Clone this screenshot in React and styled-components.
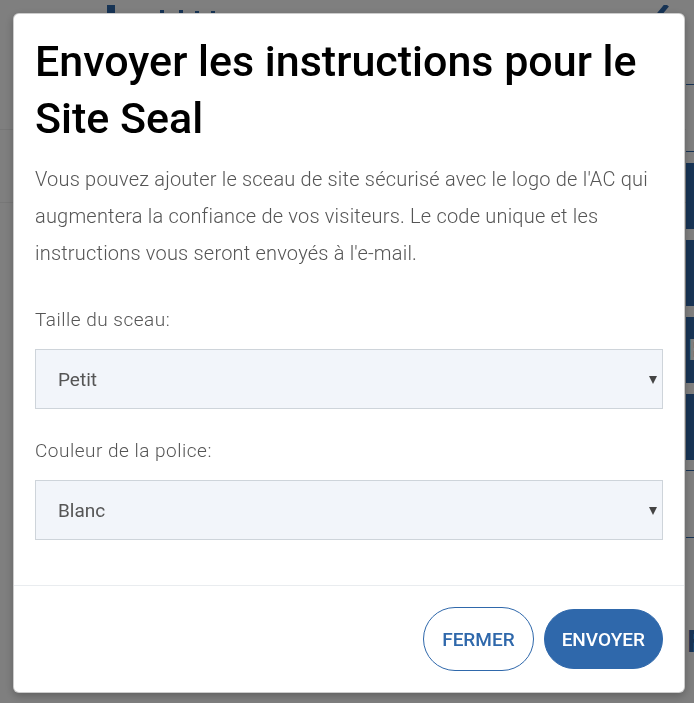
import React from "react";
import styled, { createGlobalStyle } from "styled-components";

const GlobalStyle = createGlobalStyle`
  html, body {
    margin: 0;
    padding: 0;
    overflow: hidden;
  }
  body {
    font-family: Roboto, "Liberation Sans", sans-serif;
    background: #fff;
  }
`;

/* page under the dialog */
const Page = styled.div`
  width: 880px;
  height: 703px;
  display: flex;
  background: #fff;
`;

const Main = styled.div`
  width: 686px;
  display: flex;
  flex-direction: column;
`;

const Header = styled.header`
  height: 130px;
  box-sizing: border-box;
  padding: 5px 17px 0 107px;
  display: flex;
  justify-content: space-between;
  align-items: flex-start;
  border-bottom: 1px solid #eee;
`;

const Band = styled.div`
  height: 72px;
  border-bottom: 1px solid #eee;
`;

const Sidebar = styled.aside`
  width: 194px;
  padding-top: 84px;
  display: flex;
  flex-direction: column;
`;

const SideSection = styled.div`
  height: 66px;
  margin-top: ${(p) => p.$offset || 0}px;
  border-top: 1px solid #2f68ab;
  border-bottom: 1px solid #2f68ab;
`;

const SideButtons = styled.div`
  margin-top: 11px;
  display: flex;
  flex-direction: column;
  gap: 11px;
`;

const SideButton = styled.div`
  height: 66px;
  background: #2f68ab;
  color: #fff;
  font-size: 30px;
  font-weight: 500;
  line-height: 66px;
  padding-left: 2px;
`;

const SideTitle = styled.div`
  margin-top: 84px;
  padding-left: 1px;
  color: #2f68ab;
  font-size: 32px;
  font-weight: 700;
`;

/* dialog */
const Backdrop = styled.div`
  position: fixed;
  inset: 0;
  background: rgba(0, 0, 0, 0.5);
  display: flex;
  align-items: flex-start;
  padding: 13px 0 0 13px;
`;

const Modal = styled.div`
  width: 672px;
  box-sizing: border-box;
  background: #fff;
  border: 1px solid rgba(0, 0, 0, 0.2);
  border-radius: 6px;
  box-shadow: 0 3px 9px rgba(0, 0, 0, 0.25);
  display: flex;
  flex-direction: column;
`;

const ModalHeader = styled.div`
  padding: 19px 21px 0;
`;

const Title = styled.h4`
  margin: 0;
  font-size: 43px;
  line-height: 57px;
  font-weight: 500;
  color: #000;
`;

const ModalBody = styled.div`
  padding: 14px 21px 45px;
  display: flex;
  flex-direction: column;
`;

const Intro = styled.p`
  margin: 0 0 34px;
  font-size: 20px;
  line-height: 37px;
  letter-spacing: 0.2px;
  font-weight: 300;
  color: #555;
`;

const Fields = styled.div`
  display: flex;
  flex-direction: column;
  gap: 28px;
`;

const Field = styled.div`
  display: flex;
  flex-direction: column;
  gap: 16px;
`;

const Label = styled.label`
  font-size: 19px;
  line-height: 27px;
  letter-spacing: 0.5px;
  font-weight: 300;
  color: #555;
`;

const SelectWrap = styled.div`
  position: relative;
`;

const Select = styled.select`
  appearance: none;
  width: 100%;
  height: 60px;
  box-sizing: border-box;
  padding: 0 30px 0 22px;
  border: 1px solid #ced4da;
  border-radius: 0;
  background: #f2f5fa;
  font-family: inherit;
  font-size: 19px;
  font-weight: 400;
  color: #555;
  outline: none;
`;

const Caret = styled.svg`
  position: absolute;
  right: 6px;
  top: 26px;
  width: 8px;
  height: 9px;
  pointer-events: none;
`;

const ModalFooter = styled.div`
  border-top: 1px solid #e9ecef;
  padding: 21px 21px 21px;
  display: flex;
  justify-content: flex-end;
  align-items: center;
  gap: 10px;
`;

const Button = styled.button`
  height: ${(p) => (p.$primary ? 60 : 64)}px;
  padding: 0 ${(p) => (p.$primary ? 17 : 18)}px;
  border: 1px solid #2f68ab;
  border-radius: 32px;
  background: ${(p) => (p.$primary ? "#2f68ab" : "#fff")};
  color: ${(p) => (p.$primary ? "#fff" : "#2f68ab")};
  font-family: inherit;
  font-size: 19px;
  font-weight: 500;
  text-transform: uppercase;
  cursor: pointer;
`;

const Logo = () => (
  <svg width="120" height="30" viewBox="0 0 120 30">
    <rect x="0" y="0" width="8" height="30" fill="#2f68ab" />
    <rect x="53" y="5" width="4" height="25" fill="#2f68ab" />
    <rect x="72" y="5" width="4" height="25" fill="#2f68ab" />
    <rect x="88" y="6" width="4" height="24" fill="#2f68ab" />
    <rect x="104" y="6" width="4" height="24" fill="#2f68ab" />
  </svg>
);

const Slash = () => (
  <svg width="16" height="30" viewBox="0 0 16 30">
    <path d="M14 0 L4 12 L1 30" stroke="#2f68ab" strokeWidth="5" fill="none" />
  </svg>
);

const Arrow = () => (
  <Caret viewBox="0 0 8 9">
    <path d="M0 1 H8 L4 9 Z" fill="#444" />
  </Caret>
);

const SealField = ({ label, value, options }) => (
  <Field>
    <Label>{label}</Label>
    <SelectWrap>
      <Select defaultValue={value}>
        {options.map((o) => (
          <option key={o}>{o}</option>
        ))}
      </Select>
      <Arrow />
    </SelectWrap>
  </Field>
);

const App = () => {
  return (
    <>
      <GlobalStyle />
      <Page>
        <Main>
          <Header>
            <Logo />
            <Slash />
          </Header>
          <Band />
        </Main>
        <Sidebar>
          <SideSection />
          <SideButtons>
            <SideButton />
            <SideButton />
            <SideButton>E</SideButton>
            <SideButton />
          </SideButtons>
          <SideSection $offset={10} />
          <SideTitle>F</SideTitle>
        </Sidebar>
      </Page>
      <Backdrop>
        <Modal>
          <ModalHeader>
            <Title>Envoyer les instructions pour le Site Seal</Title>
          </ModalHeader>
          <ModalBody>
            <Intro>
              Vous pouvez ajouter le sceau de site sécurisé avec le logo de
              l'AC qui augmentera la confiance de vos visiteurs. Le code unique
              et les instructions vous seront envoyés à l'e-mail.
            </Intro>
            <Fields>
              <SealField
                label="Taille du sceau:"
                value="Petit"
                options={["Petit", "Moyen", "Grand"]}
              />
              <SealField
                label="Couleur de la police:"
                value="Blanc"
                options={["Blanc", "Noir"]}
              />
            </Fields>
          </ModalBody>
          <ModalFooter>
            <Button>Fermer</Button>
            <Button $primary>Envoyer</Button>
          </ModalFooter>
        </Modal>
      </Backdrop>
    </>
  );
};

export default App;
